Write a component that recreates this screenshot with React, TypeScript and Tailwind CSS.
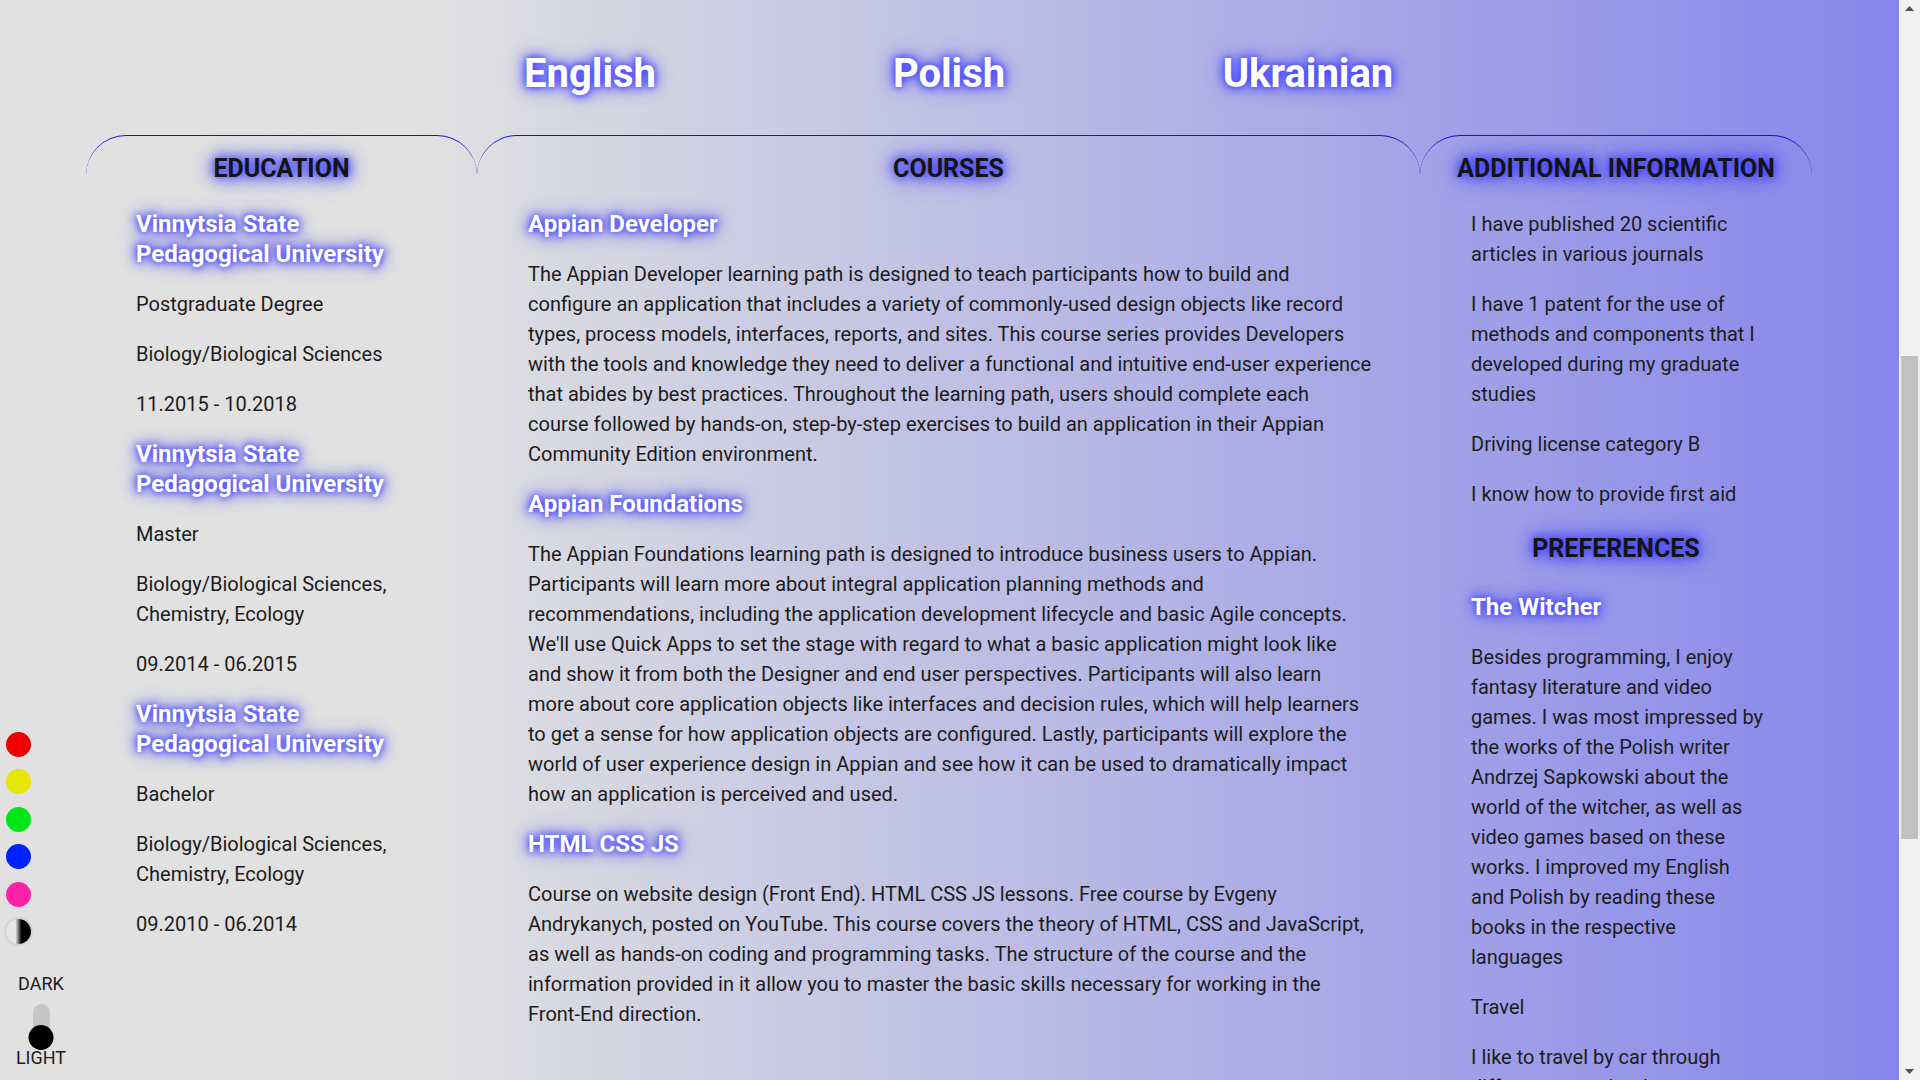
import React from 'react';

const glowWhite = 'text-white [text-shadow:0_0_6px_#4040ff,0_0_12px_#4545ff,0_0_20px_#5a5aff]';
const glowDark = 'text-[#141414] [text-shadow:0_0_8px_#3535ff,0_0_16px_#4040ff,0_0_24px_#6060ff]';

type Item = { kind: 'h' | 'p'; text: string };

const education: Item[] = [
  { kind: 'h', text: 'Vinnytsia State Pedagogical University' },
  { kind: 'p', text: 'Postgraduate Degree' },
  { kind: 'p', text: 'Biology/Biological Sciences' },
  { kind: 'p', text: '11.2015 - 10.2018' },
  { kind: 'h', text: 'Vinnytsia State Pedagogical University' },
  { kind: 'p', text: 'Master' },
  { kind: 'p', text: 'Biology/Biological Sciences, Chemistry, Ecology' },
  { kind: 'p', text: '09.2014 - 06.2015' },
  { kind: 'h', text: 'Vinnytsia State Pedagogical University' },
  { kind: 'p', text: 'Bachelor' },
  { kind: 'p', text: 'Biology/Biological Sciences, Chemistry, Ecology' },
  { kind: 'p', text: '09.2010 - 06.2014' },
];

const courses: Item[] = [
  { kind: 'h', text: 'Appian Developer' },
  {
    kind: 'p',
    text: 'The Appian Developer learning path is designed to teach participants how to build and configure an application that includes a variety of commonly-used design objects like record types, process models, interfaces, reports, and sites. This course series provides Developers with the tools and knowledge they need to deliver a functional and intuitive end-user experience that abides by best practices. Throughout the learning path, users should complete each course followed by hands-on, step-by-step exercises to build an application in their Appian Community Edition environment.',
  },
  { kind: 'h', text: 'Appian Foundations' },
  {
    kind: 'p',
    text: "The Appian Foundations learning path is designed to introduce business users to Appian. Participants will learn more about integral application planning methods and recommendations, including the application development lifecycle and basic Agile concepts. We'll use Quick Apps to set the stage with regard to what a basic application might look like and show it from both the Designer and end user perspectives. Participants will also learn more about core application objects like interfaces and decision rules, which will help learners to get a sense for how application objects are configured. Lastly, participants will explore the world of user experience design in Appian and see how it can be used to dramatically impact how an application is perceived and used.",
  },
  { kind: 'h', text: 'HTML CSS JS' },
  {
    kind: 'p',
    text: 'Course on website design (Front End). HTML CSS JS lessons. Free course by Evgeny Andrykanych, posted on YouTube. This course covers the theory of HTML, CSS and JavaScript, as well as hands-on coding and programming tasks. The structure of the course and the information provided in it allow you to master the basic skills necessary for working in the Front-End direction.',
  },
];

const additional: Item[] = [
  { kind: 'p', text: 'I have published 20 scientific articles in various journals' },
  { kind: 'p', text: 'I have 1 patent for the use of methods and components that I developed during my graduate studies' },
  { kind: 'p', text: 'Driving license category B' },
  { kind: 'p', text: 'I know how to provide first aid' },
];

const preferences: Item[] = [
  { kind: 'h', text: 'The Witcher' },
  {
    kind: 'p',
    text: 'Besides programming, I enjoy fantasy literature and video games. I was most impressed by the works of the Polish writer Andrzej Sapkowski about the world of the witcher, as well as video games based on these works. I improved my English and Polish by reading these books in the respective languages',
  },
  { kind: 'p', text: 'Travel' },
  {
    kind: 'p',
    text: 'I like to travel by car through different countries, learn new cultures and see the sights of Europe.',
  },
];

const Items = ({ items }: { items: Item[] }) => (
  <>
    {items.map((it, i) =>
      it.kind === 'h' ? (
        <h3 key={i} className={`my-5 text-[24px] font-bold leading-[30px] ${glowWhite}`}>
          {it.text}
        </h3>
      ) : (
        <p key={i} className="my-5 text-[20px] leading-[30px] text-[#1c1c1c]">
          {it.text}
        </p>
      )
    )}
  </>
);

const SectionTitle = ({ children }: { children: React.ReactNode }) => (
  <h2 className={`text-center text-[25px] font-bold uppercase leading-[40px] ${glowDark}`}>{children}</h2>
);

const Column = ({
  width,
  pad,
  title,
  children,
}: {
  width: string;
  pad: string;
  title: string;
  children: React.ReactNode;
}) => (
  <section className={`${width} shrink-0 rounded-t-[40px] border-t border-[#1414d8] pt-[13px]`}>
    <SectionTitle>{title}</SectionTitle>
    <div className={pad}>{children}</div>
  </section>
);

const swatches = [
  'bg-[#ee0000]',
  'bg-[#e6e600]',
  'bg-[#00e619]',
  'bg-[#0022ff]',
  'bg-[#ff22a8]',
  'bg-[linear-gradient(to_right,#e6e6e6_38%,#000_62%)] shadow-[0_0_3px_rgba(0,0,0,0.25)]',
];

const Arrow = ({ up }: { up?: boolean }) => (
  <div className="flex h-[17px] items-center justify-center">
    <svg width="9" height="5" viewBox="0 0 9 5">
      <path d={up ? 'M0 5 L4.5 0 L9 5 Z' : 'M0 0 L4.5 5 L9 0 Z'} fill="#505050" />
    </svg>
  </div>
);

const App: React.FC = () => {
  return (
    <div className="flex h-[1080px] w-full overflow-hidden font-['Roboto',sans-serif]">
      <div className="flex flex-1 bg-[linear-gradient(90deg,#e1e1e1_22%,#8686eb_100%)]">
        {/* Theme panel */}
        <aside className="flex w-[86px] shrink-0 flex-col justify-end pb-[12px]">
          <div className="ml-[6px] flex flex-col gap-[12.5px]">
            {swatches.map((c, i) => (
              <div key={i} className={`h-[25px] w-[25px] rounded-full ${c}`} />
            ))}
          </div>
          <div className="ml-[6px] mt-[29px] flex w-[70px] flex-col items-center text-[18px] leading-[21px] text-[#1c1c1c]">
            <span>DARK</span>
            <div className="relative mt-[10px] h-[43px] w-[17px] rounded-full bg-[#c6c6c6]">
              <div className="absolute bottom-[-3px] left-1/2 h-[25px] w-[25px] -translate-x-1/2 rounded-full bg-black" />
            </div>
            <span>LIGHT</span>
          </div>
        </aside>

        {/* Main */}
        <main className="w-[1726px] shrink-0 pt-[50px]">
          <nav className="grid grid-cols-[359px_359px_359px] justify-center">
            {['English', 'Polish', 'Ukrainian'].map((l) => (
              <a key={l} className={`text-center text-[40px] font-bold leading-[48px] ${glowWhite}`}>
                {l}
              </a>
            ))}
          </nav>
          <div className="mt-[37px] flex">
            <Column width="w-[391px]" pad="pl-[50px] pr-[46px]" title="Education">
              <Items items={education} />
            </Column>
            <Column width="w-[943px]" pad="pl-[51px] pr-[48px]" title="Courses">
              <Items items={courses} />
            </Column>
            <Column width="w-[392px]" pad="pl-[51px] pr-[44px]" title="Additional information">
              <Items items={additional} />
              <div className="-ml-[51px] -mr-[44px] pb-[3px]">
                <SectionTitle>Preferences</SectionTitle>
              </div>
              <Items items={preferences} />
            </Column>
          </div>
        </main>
      </div>

      {/* Scrollbar */}
      <div className="flex w-[21px] shrink-0 flex-col bg-[#f1f1f1]">
        <Arrow up />
        <div className="flex-1">
          <div className="ml-[2px] mt-[339px] h-[483px] w-[17px] bg-[#c1c1c1]" />
        </div>
        <Arrow />
      </div>
    </div>
  );
};

export default App;
